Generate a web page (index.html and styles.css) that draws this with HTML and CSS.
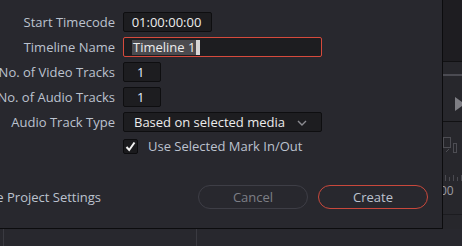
FILE: index.html
```html
<!DOCTYPE html>
<html>
	<head>
		<meta charset="UTF-8" />
		<title>New Timeline</title>
		<link rel="stylesheet" href="styles.css">
	</head>

	<body>
		<div class="screen">
			<div class="top">
				<div class="dialog">
					<div class="form">
						<div class="label"><span>Start Timecode</span></div>
						<div class="control"><div class="field tc">01:00:00:00</div></div>

						<div class="label"><span>Timeline Name</span></div>
						<div class="control">
							<div class="field wide focused">
								<span class="selected">Timeline 1</span><span class="caret"></span>
							</div>
						</div>

						<div class="label"><span>No. of Video Tracks</span></div>
						<div class="control"><div class="field num">1</div></div>

						<div class="label"><span>No. of Audio Tracks</span></div>
						<div class="control"><div class="field num">1</div></div>

						<div class="label"><span>Audio Track Type</span></div>
						<div class="control">
							<div class="field wide select">
								<span>Based on selected media</span>
								<svg class="chevron" width="10" height="6" viewBox="0 0 10 6">
									<path d="M1 1 L5 5 L9 1" fill="none" stroke="#8b8b90" stroke-width="1.4" />
								</svg>
							</div>
						</div>

						<div class="label"></div>
						<div class="control check-row">
							<span class="checkbox">
								<svg width="13" height="13" viewBox="0 0 13 13">
									<path d="M2.5 7 L5.2 10 L10.5 2.5" fill="none" stroke="#f2f2f2" stroke-width="2" />
								</svg>
							</span>
							<span class="check-label">Use Selected Mark In/Out</span>
						</div>
					</div>

					<div class="footer">
						<div class="footer-left"><span>Use Project Settings</span></div>
						<div class="buttons">
							<div class="btn cancel">Cancel</div>
							<div class="btn create">Create</div>
						</div>
					</div>
				</div>

				<div class="side">
					<div class="side-top"></div>
					<div class="side-transport">
						<div class="scrub"></div>
						<div class="play"></div>
					</div>
					<div class="side-tools">
						<svg class="monitor" width="19" height="20" viewBox="0 0 19 20">
							<rect x="0.5" y="0.5" width="7" height="10" fill="none" stroke="#4d4d53" />
							<path d="M3 15 L6 12" stroke="#4d4d53" />
							<rect x="10.5" y="6.5" width="3" height="9" fill="none" stroke="#4d4d53" />
						</svg>
						<div class="ticks">
							<span></span><span></span><span></span><span></span><span></span>
						</div>
						<div class="ruler-num">00</div>
					</div>
					<div class="side-rest"></div>
				</div>
			</div>

			<div class="timeline">
				<div class="track"></div>
				<div class="track"></div>
				<div class="track"></div>
			</div>
		</div>
	</body>
</html>
```

FILE: styles.css
```css
* {
	box-sizing: border-box;
	font-family: "Open Sans", "Noto Sans", sans-serif;
}

html,
body {
	margin: 0;
	background-color: #28282e;
	overflow: hidden;
}

.screen {
	width: 462px;
	height: 246px;
	display: flex;
	flex-direction: column;
}

.top {
	display: flex;
	height: 229px;
}

.dialog {
	width: 443px;
	height: 229px;
	background-color: #28282e;
	border-right: 1px solid #0c0c0e;
	border-bottom: 1px solid #0c0c0e;
	padding-top: 12px;
	display: flex;
	flex-direction: column;
}

.form {
	display: grid;
	grid-template-columns: 115px 1fr;
	column-gap: 8px;
	grid-auto-rows: 20px;
	row-gap: 5px;
}

.label {
	display: flex;
	justify-content: flex-end;
	align-items: center;
	white-space: nowrap;
	font-size: 13px;
	color: #bcc2ce;
}

.control {
	display: flex;
	align-items: center;
}

.field {
	height: 20px;
	background-color: #1d1d20;
	border: 1px solid #0e0e10;
	border-radius: 2px;
	color: #ececec;
	font-size: 13px;
	display: flex;
	align-items: center;
	white-space: nowrap;
}

.tc {
	width: 89px;
	justify-content: center;
	padding-right: 2px;
}

.wide {
	width: 199px;
}

.focused {
	border-color: #d64a3c;
	padding-left: 8px;
}

.selected {
	background-color: #4b4b4f;
	line-height: 15px;
	padding: 0 1px;
}

.caret {
	width: 4px;
	height: 15px;
	background-color: #d6d6d6;
}

.num {
	width: 38px;
	padding-left: 13px;
	color: #e2ecff;
}

.select {
	justify-content: space-between;
	padding-left: 10px;
	padding-right: 14px;
}

.chevron {
	margin-top: 1px;
}

.check-row {
	margin-top: -2px;
}

.checkbox {
	width: 15px;
	height: 15px;
	background-color: #1a1a1d;
	border: 1px solid #0c0c0e;
	border-radius: 2px;
	display: flex;
	align-items: center;
	justify-content: center;
}

.check-label {
	margin-left: 10px;
	font-size: 13px;
	color: #bcc2ce;
	white-space: nowrap;
}

.footer {
	margin-top: 28px;
	display: flex;
	align-items: center;
	justify-content: space-between;
	padding-right: 14px;
}

.footer-left {
	width: 101px;
	display: flex;
	justify-content: flex-end;
	white-space: nowrap;
	font-size: 13px;
	color: #bcc2ce;
}

.buttons {
	display: flex;
	gap: 10px;
}

.btn {
	width: 110px;
	height: 24px;
	border-radius: 12px;
	display: flex;
	align-items: center;
	justify-content: center;
	font-size: 13px;
}

.cancel {
	border: 1px solid #3e3e46;
	color: #7d7f86;
}

.create {
	border: 1px solid #c9483c;
	color: #bcc2ce;
}

.side {
	flex: 1;
	display: flex;
	flex-direction: column;
	overflow: hidden;
}

.side-top {
	height: 62px;
	background-color: #1e1d21;
	border-bottom: 1px solid #111113;
}

.side-transport {
	height: 60px;
	background-color: #27272c;
	border-bottom: 1px solid #111113;
	padding-top: 12px;
}

.scrub {
	height: 2px;
	background-color: #4b4b52;
}

.play {
	margin-top: 21px;
	margin-left: 12px;
	width: 0;
	height: 0;
	border-top: 7px solid transparent;
	border-bottom: 7px solid transparent;
	border-left: 10px solid #7e7e84;
}

.side-tools {
	height: 93px;
	background-color: #27272c;
	border-bottom: 1px solid #1c1c20;
	padding-top: 15px;
}

.monitor {
	display: block;
}

.ticks {
	margin-top: 16px;
	display: flex;
	gap: 3px;
	padding-left: 2px;
	height: 8px;
	align-items: flex-end;
}

.ticks span {
	width: 1px;
	height: 6px;
	background-color: #4a4a50;
}

.ticks span:nth-child(2n) {
	height: 4px;
}

.ruler-num {
	margin-top: 3px;
	margin-left: -3px;
	font-size: 12px;
	color: #9c9ca2;
	line-height: 14px;
}

.side-rest {
	flex: 1;
	background-color: #27272c;
}

.timeline {
	flex: 1;
	display: flex;
	background-color: #28282e;
}

.track {
	width: 193px;
	border-left: 1px solid #3a3a41;
}

.track:first-child {
	width: 3px;
	border-left: none;
	border-right: none;
}
```
